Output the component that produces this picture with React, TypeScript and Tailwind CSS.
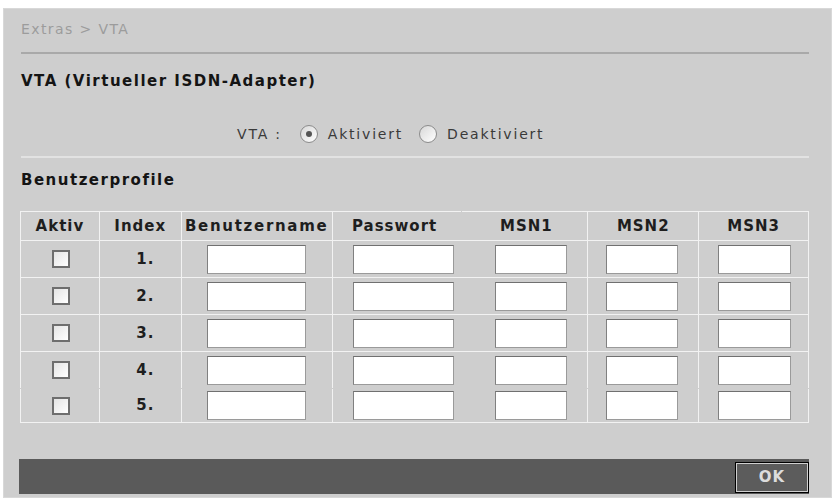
import React, { useState } from "react";

const font = { fontFamily: '"DejaVu Sans", Verdana, sans-serif' };

type Profile = { active: boolean; user: string; pass: string; msn1: string; msn2: string; msn3: string };

const emptyProfile = (): Profile => ({ active: false, user: "", pass: "", msn1: "", msn2: "", msn3: "" });

// old-style inset text field
function Field({ w, value, onChange }: { w: string; value: string; onChange: (v: string) => void }) {
  return (
    <input
      value={value}
      onChange={(e) => onChange(e.target.value)}
      className={`${w} h-[29px] bg-white border border-[#9a9a9a] border-t-[#707070] border-l-[#808080] outline-none px-1 text-[13px] font-normal`}
    />
  );
}

function CheckBox({ checked, onClick }: { checked: boolean; onClick: () => void }) {
  return (
    <button
      type="button"
      onClick={onClick}
      className="w-[18px] h-[18px] border-2 border-[#6e6e6e] bg-gradient-to-br from-[#e4e4e4] to-white flex items-center justify-center text-[11px] leading-none text-[#222]"
    >
      {checked ? "✓" : ""}
    </button>
  );
}

function Radio({ selected, onClick }: { selected: boolean; onClick: () => void }) {
  return (
    <button
      type="button"
      onClick={onClick}
      className="w-[18px] h-[18px] rounded-full border border-[#8c8c8c] bg-gradient-to-br from-[#d8d8d8] to-white flex items-center justify-center"
    >
      {selected && <span className="w-[6px] h-[6px] rounded-full bg-[#555]" />}
    </button>
  );
}

export default function App() {
  const [vtaOn, setVtaOn] = useState(true);
  const [profiles, setProfiles] = useState<Profile[]>(() => [1, 2, 3, 4, 5].map(emptyProfile));

  const update = (idx: number, patch: Partial<Profile>) =>
    setProfiles((prev) => prev.map((p, i) => (i === idx ? { ...p, ...patch } : p)));

  const cell = "border border-[#f2f2f2] p-0";

  return (
    <div className="min-h-screen bg-white pt-2 px-[3px]" style={font}>
      <div className="bg-[#cecece] border border-[#d8d8d8] pl-[15px] pr-[22px] pb-[3px]">
        {/* breadcrumb */}
        <div className="pt-[10px] pl-[2px] text-[14px] leading-[20px] tracking-[1.4px] text-[#9c9c9c]">Extras &gt; VTA</div>
        <div className="mt-[13px] ml-[2px] h-[2px] bg-[#a9a9a9]" />

        <div className="mt-[17px] pl-[2px] text-[15px] leading-[20px] font-bold tracking-[1.5px] text-[#141414]">
          VTA (Virtueller ISDN-Adapter)
        </div>

        <div className="mt-[33px] pl-[218px] flex items-center h-[20px] text-[14px] tracking-[1.8px] text-[#3a3a3a]">
          <span className="mr-[18px]">VTA :</span>
          <Radio selected={vtaOn} onClick={() => setVtaOn(true)} />
          <span className="ml-[10px] mr-[16px]">Aktiviert</span>
          <Radio selected={!vtaOn} onClick={() => setVtaOn(false)} />
          <span className="ml-[10px]">Deaktiviert</span>
        </div>
        <div className="mt-[12px] ml-[2px] h-[2px] bg-[#e2e2e2]" />

        <div className="mt-[12px] pl-[2px] text-[15px] leading-[20px] font-bold tracking-[1.5px] text-[#141414]">Benutzerprofile</div>

        {/* profile table */}
        <table className="mt-[21px] ml-[1px] table-fixed border-collapse text-[15px] font-bold tracking-[1px] text-[#1e1e1e]">
          <colgroup>
            <col className="w-[79px]" />
            <col className="w-[82px]" />
            <col className="w-[151px]" />
            <col className="w-[129px]" />
            <col className="w-[127px]" />
            <col className="w-[111px]" />
            <col className="w-[110px]" />
          </colgroup>
          <thead>
            <tr className="h-[29px]">
              <th className={cell}>Aktiv</th>
              <th className={cell}>Index</th>
              <th className={`${cell} tracking-[1.7px]`}>Benutzername</th>
              <th className={`${cell} border-r-[#cecece] pr-[4px]`}>Passwort</th>
              <th className={`${cell} pl-[4px]`}>MSN1</th>
              <th className={cell}>MSN2</th>
              <th className={cell}>MSN3</th>
            </tr>
          </thead>
          <tbody>
            {profiles.map((p, i) => {
              const sep = i === 3 ? "border-b-[#cecece]" : "";
              return (
                <tr key={i} className={i === 4 ? "h-[34px]" : "h-[37px]"}>
                  <td className={`${cell} ${sep}`}>
                    <div className="flex justify-center pl-[3px]">
                      <CheckBox checked={p.active} onClick={() => update(i, { active: !p.active })} />
                    </div>
                  </td>
                  <td className={`${cell} ${sep} text-center pl-[10px]`}>{i + 1}.</td>
                  <td className={`${cell} ${sep}`}>
                    <div className="flex justify-center">
                      <Field w="w-[99px]" value={p.user} onChange={(v) => update(i, { user: v })} />
                    </div>
                  </td>
                  <td className={`${cell} border-r-[#cecece] ${sep}`}>
                    <div className="flex justify-center pl-[14px]">
                      <Field w="w-[101px]" value={p.pass} onChange={(v) => update(i, { pass: v })} />
                    </div>
                  </td>
                  <td className={`${cell} ${sep}`}>
                    <div className="flex justify-center pl-[14px]">
                      <Field w="w-[72px]" value={p.msn1} onChange={(v) => update(i, { msn1: v })} />
                    </div>
                  </td>
                  <td className={`${cell} ${sep}`}>
                    <div className="flex justify-center pr-[2px]">
                      <Field w="w-[72px]" value={p.msn2} onChange={(v) => update(i, { msn2: v })} />
                    </div>
                  </td>
                  <td className={`${cell} ${sep}`}>
                    <div className="flex justify-center pl-[2px]">
                      <Field w="w-[73px]" value={p.msn3} onChange={(v) => update(i, { msn3: v })} />
                    </div>
                  </td>
                </tr>
              );
            })}
          </tbody>
        </table>

        {/* action bar */}
        <div className="mt-[36px] h-[35px] bg-[#5a5a5a] flex justify-end items-end pb-[1px]">
          <button
            type="button"
            className="w-[74px] h-[31px] border border-black bg-[#5c5c5c] shadow-[inset_1px_1px_0_#d0d0d0,inset_-1px_-1px_0_#d0d0d0] text-[15px] font-bold tracking-[1px] text-[#dcdcdc]"
          >
            OK
          </button>
        </div>
      </div>
    </div>
  );
}
